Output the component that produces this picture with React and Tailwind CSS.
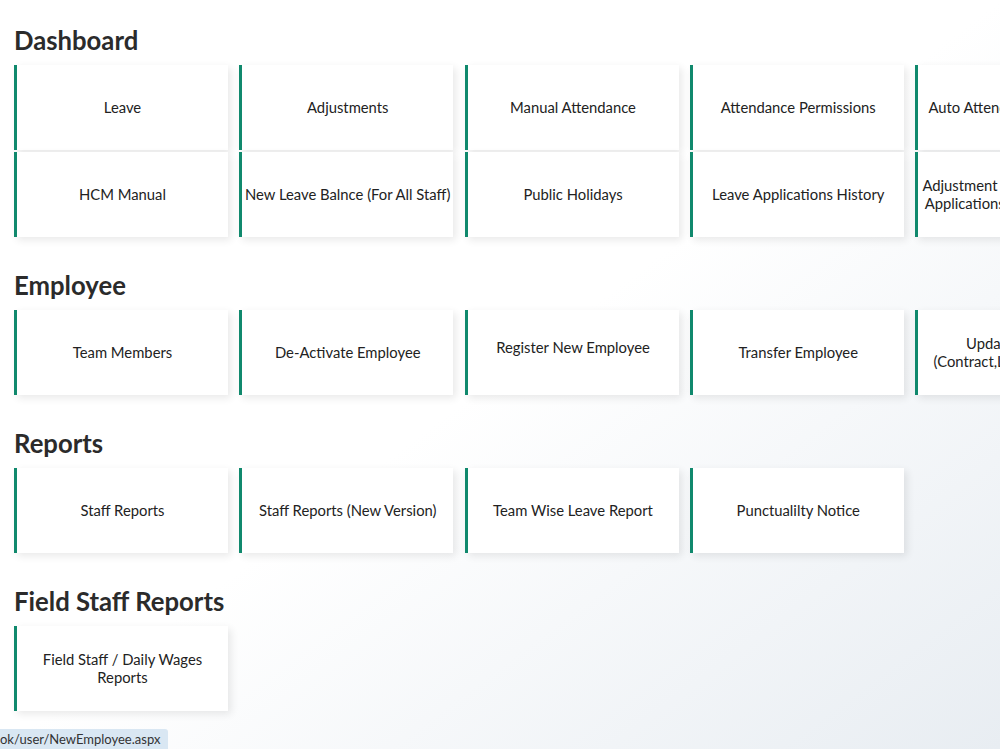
import React from 'react'

// menu sections shown on the landing page
const sections = [
  {
    title: 'Dashboard',
    rows: [
      ['Leave', 'Adjustments', 'Manual Attendance', 'Attendance Permissions', 'Auto Attendance Permissions'],
      ['HCM Manual', 'New Leave Balnce (For All Staff)', 'Public Holidays', 'Leave Applications History', 'Adjustment And Leave Pending\nApplications Pending Approval'],
    ],
  },
  {
    title: 'Employee',
    rows: [
      ['Team Members', 'De-Activate Employee', 'Register New Employee*', 'Transfer Employee', 'Update Employee\n(Contract,Leave,Salary,Shift)'],
    ],
  },
  {
    title: 'Reports',
    rows: [['Staff Reports', 'Staff Reports (New Version)', 'Team Wise Leave Report', 'Punctualilty Notice']],
  },
  {
    title: 'Field Staff Reports',
    rows: [['Field Staff / Daily Wages\nReports']],
  },
]

function Tile({ label }) {
  // the asterisk marks a tile whose label sits a bit higher (stray <br> in the original)
  const raised = label.endsWith('*')
  const text = raised ? label.slice(0, -1) : label
  return (
    <a
      href="#"
      className="shrink-0 w-[214px] h-[85px] bg-white border-l-[3px] border-[#10896d] shadow-[3px_3px_8px_rgba(0,0,0,0.09)] flex flex-col items-center justify-center text-center text-[14.8px] leading-[18px] text-[#222]"
    >
      <div className={raised ? 'pb-[11px] flex flex-col items-center' : 'pb-[1px] flex flex-col items-center'}>
        {text.split('\n').map((line) => (
          <span key={line} className="whitespace-nowrap">{line}</span>
        ))}
      </div>
    </a>
  )
}

export default function App() {
  return (
    <div
      className="relative w-full h-[749px] overflow-hidden bg-gradient-to-br from-white via-white to-[#e8edf2]"
      style={{ fontFamily: 'Lato, "Open Sans", sans-serif' }}
    >
      <div className="pl-[14px] pt-[25px]">
        {sections.map((s, i) => (
          <section key={s.title} className={i === 0 ? '' : 'mt-[33px]'}>
            <h2 className="text-[25.7px] leading-[30px] font-bold text-[#2b2b2b] mb-[10px]">{s.title}</h2>
            <div className="flex flex-col gap-[2px]">
              {s.rows.map((row, r) => (
                <div key={r} className="flex gap-[11.25px] flex-nowrap">
                  {row.map((l) => (
                    <Tile key={l} label={l} />
                  ))}
                </div>
              ))}
            </div>
          </section>
        ))}
      </div>

      {/* browser status bar hover link */}
      <div className="absolute left-0 bottom-0 h-[20px] pr-[8px] bg-[#d9e7f3] rounded-tr-[3px] text-[13px] leading-[20px] text-[#333] whitespace-nowrap">
        ok/user/NewEmployee.aspx
      </div>
    </div>
  )
}
